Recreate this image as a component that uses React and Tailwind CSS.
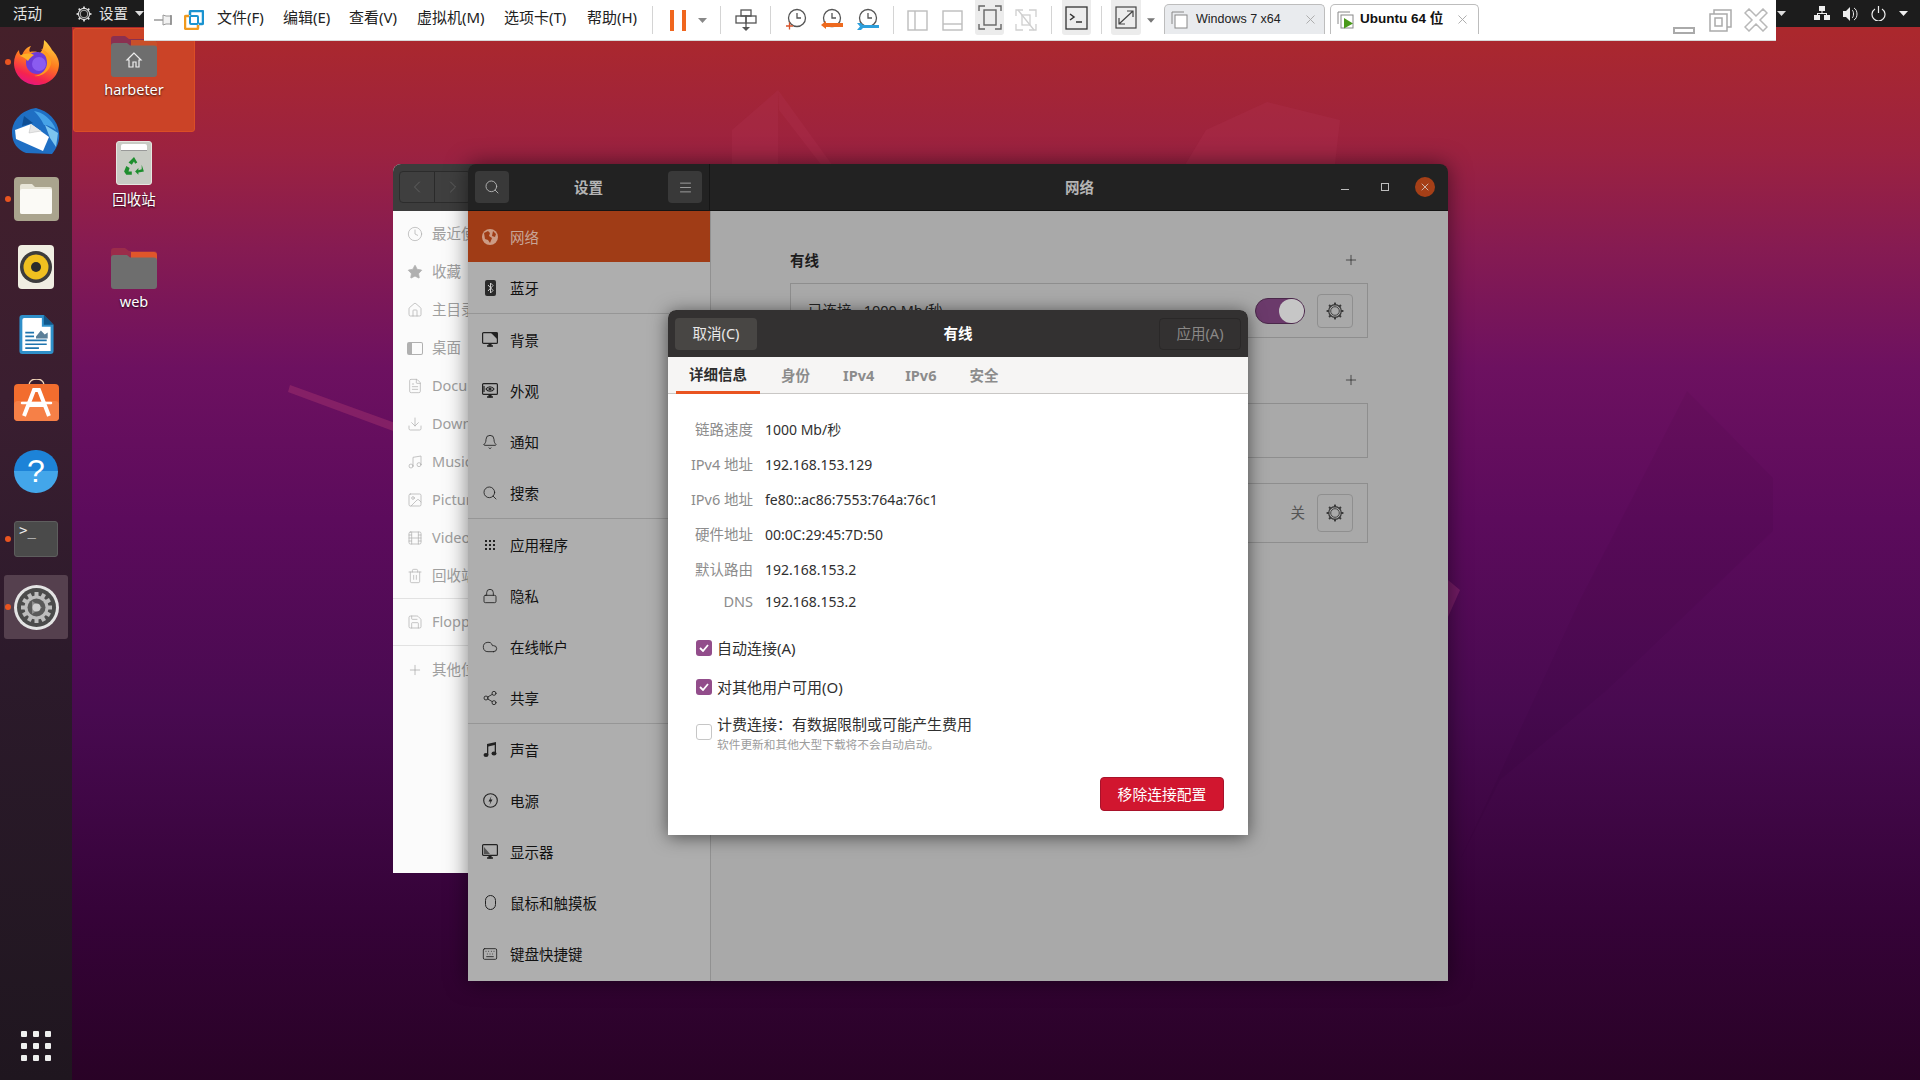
import {
  Bell, Cloud, Clock, Download, FileText, Film, Home, Image as ImageIcon, Keyboard, Lock,
  Music, Plus, Save, Search, Share2, Star, Trash2, X, Menu, ChevronLeft, ChevronRight,
} from "lucide-react";

const Sep = () => <div className="w-px h-[28px] bg-[#d4d4d4] shrink-0" />;

const Caret = ({ className = "" }) => (
  <svg viewBox="0 0 9 5" className={`w-[9px] h-[5px] shrink-0 ${className}`}><path d="M0 0h9L4.5 5z" fill="currentColor" /></svg>
);

function Gear({ size = 18, color = "#333" }) {
  const teeth = [0, 45, 90, 135, 180, 225, 270, 315];
  return (
    <svg width={size} height={size} viewBox="0 0 18 18" fill="none">
      {teeth.map((t) => (
        <rect key={t} x="8" y="0.6" width="2" height="2.600" fill={color} transform={`rotate(${t} 9 9)`} />
      ))}
      <circle cx="9" cy="9" r="6.300" stroke={color} strokeWidth="1.200" />
      <circle cx="9" cy="9" r="4.300" stroke={color} strokeWidth="0.900" />
    </svg>
  );
}

function FolderIcon({ home }) {
  return (
    <svg width="46" height="41" viewBox="0 0 46 41">
      <path d="M0 3a3 3 0 0 1 3-3h11l4 3h25a3 3 0 0 1 3 3v10H0z" fill={home ? "#8a3050" : "#9b2c4a"} />
      <path d="M20 4h23a3 3 0 0 1 3 3v6H20z" fill={home ? "#c8502a" : "#e0562a"} />
      <path d="M0 10a3 3 0 0 1 3-3h13l3 2.500h24a3 3 0 0 1 3 3V38a3 3 0 0 1-3 3H3a3 3 0 0 1-3-3z" fill="#6e6e6e" />
      {home && <path d="M23 17l-7 7h2v7h4v-5h3v5h3v-7h2z" fill="none" stroke="#eee" strokeWidth="1.200" />}
    </svg>
  );
}

function Firefox() {
  return (
    <svg width="46" height="46" viewBox="0 0 46 46">
      <defs>
        <linearGradient id="ffa" x1="0.7" y1="0" x2="0.3" y2="1">
          <stop offset="0" stopColor="#ffd23f" />
          <stop offset="0.45" stopColor="#ff7a1f" />
          <stop offset="0.8" stopColor="#f5234f" />
          <stop offset="1" stopColor="#e31587" />
        </linearGradient>
      </defs>
      <path d="M30 1c4 3 7 8 8 10 4 4 7 9 7 14 0 12-10 21-22 21S0 37 0 24c0-5 2-10 5-13 0 3 1 5 3 6 1-5 5-9 9-10-2 3-2 5-1 6 4-1 8 0 10 1 3-3 4-8 4-13z" fill="url(#ffa)" />
      <circle cx="23" cy="24" r="11" fill="#6e3bd8" />
      <circle cx="25" cy="25" r="7" fill="#8a5cf0" />
      <path d="M6 17c4-3 10-3 14-1-3 2-5 4-6 6-3-3-5-4-8-5z" fill="#ffb028" />
      <path d="M27 10c7 2 11 9 10 15-2 8-10 13-17 12 8-1 13-7 13-13 0-6-3-11-6-14z" fill="#ff9a1f" />
    </svg>
  );
}

function Thunderbird() {
  return (
    <svg width="48" height="46" viewBox="0 0 48 46">
      <path d="M24 0C10 2 0 12 0 25c0 10 6 17 14 20l26 1c5-6 8-13 7-21C46 12 36 3 24 0z" fill="#1f6fc4" />
      <path d="M22 3c8 1 18 8 22 19-4-3-8-5-12-5-3-6-6-10-10-14z" fill="#47a3e8" />
      <path d="M33 17l13 8-2 14-6-9z" fill="#7cc5f0" />
      <path d="M3 22l16-6 18 13-6 14-27-12z" fill="#fff" />
      <path d="M19 16l-2 9 12-2" fill="#e8e8e8" stroke="#bbb" strokeWidth="0.500" />
      <path d="M12 8l9 7-11 3z" fill="#0e4f96" />
    </svg>
  );
}

function Files() {
  return (
    <div className="w-[45px] h-[44px] rounded-[4px] bg-[#aaa48e] flex items-center justify-center">
      <svg width="32" height="30" viewBox="0 0 32 30">
        <path d="M2 0h10l3 3h15a2 2 0 0 1 2 2v23a2 2 0 0 1-2 2H2a2 2 0 0 1-2-2V2a2 2 0 0 1 2-2z" fill="#e8e5d8" />
        <path d="M0 7a2 2 0 0 1 2-2h28a2 2 0 0 1 2 2v21a2 2 0 0 1-2 2H2a2 2 0 0 1-2-2z" fill="#fbfaf6" />
      </svg>
    </div>
  );
}

function Rhythmbox() {
  return (
    <div className="w-[36px] h-[44px] rounded-[4px] bg-[#f0eee2] flex items-center justify-center">
      <svg width="32" height="32" viewBox="0 0 32 32">
        <circle cx="16" cy="16" r="16" fill="#3d3d3d" />
        <circle cx="16" cy="16" r="12.500" fill="#f0c020" />
        <circle cx="16" cy="16" r="5" fill="#2c2c2c" />
      </svg>
    </div>
  );
}

function Writer() {
  return (
    <svg width="36" height="39" viewBox="0 0 36 40" className="mb-[2px]">
      <path d="M1 3a3 3 0 0 1 3-3h22l10 10v27a3 3 0 0 1-3 3H4a3 3 0 0 1-3-3z" fill="#2f8fc9" />
      <path d="M26 0l10 10H26z" fill="#12578a" />
      <path d="M4 5a2 2 0 0 1 2-2h18v9h9v25H4z" fill="#fff" />
      <path d="M7 18h9M7 22h9M7 26h22M7 30h22M7 34h14" stroke="#1f74ad" strokeWidth="1.700" />
      <path d="M18 22l5-6 4 4 3-2v6H18z" fill="#5b7f98" />
    </svg>
  );
}

function AppStore() {
  return (
    <svg width="45" height="42" viewBox="0 0 45 42" className="mb-[6px]">
      <path d="M15 6c0-8 15-8 15 0" fill="none" stroke="#f3d6b8" strokeWidth="1.500" />
      <rect x="0" y="5" width="45" height="37" rx="4" fill="#f26d2e" />
      <rect x="0" y="22" width="45" height="20" rx="4" fill="#f68047" />
      <path d="M10 37L20 11h5l10 26M15 26h15" fill="none" stroke="#fff" strokeWidth="4" />
      <path d="M8 24h29" stroke="#fff" strokeWidth="2.500" strokeLinecap="round" />
    </svg>
  );
}

function SettingsApp() {
  const teeth = [0, 30, 60, 90, 120, 150, 180, 210, 240, 270, 300, 330];
  return (
    <svg width="45" height="45" viewBox="0 0 45 45">
      <circle cx="22.500" cy="22.500" r="22.500" fill="#e4e4e4" />
      <circle cx="22.500" cy="22.500" r="19.500" fill="#4b4b4b" />
      {teeth.map((t) => (
        <rect key={t} x="20.500" y="7" width="4" height="5" fill="#bdbdbd" transform={`rotate(${t} 22.500 22.500)`} />
      ))}
      <circle cx="22.500" cy="22.500" r="12" fill="#bdbdbd" />
      <circle cx="22.500" cy="22.500" r="9" fill="#5a5a5a" />
      <path d="M18 16l10 6.500-10 6.500z" fill="#8e8e8e" />
      <circle cx="22.500" cy="22.500" r="4" fill="#cfcfcf" />
    </svg>
  );
}

const DockDot = ({ y }) => <div className={`absolute left-[5px] w-[6px] h-[6px] rounded-full bg-[#e95420] ${y}`} />;

function Dock() {
  return (
    <div className="absolute left-0 top-[27px] bottom-0 w-[72px] bg-[linear-gradient(180deg,#45202a_0%,#3a1e30_35%,#2c1a2b_60%,#1f161f_100%)]">
      <DockDot y="top-[32px]" />
      <DockDot y="top-[169px]" />
      <DockDot y="top-[509px]" />
      <DockDot y="top-[577px]" />
      <div className="flex flex-col items-center">
        <div className="h-[68px] flex items-center mt-[1px] pl-[1px]"><Firefox /></div>
        <div className="h-[69px] flex items-center"><Thunderbird /></div>
        <div className="h-[68px] flex items-center"><Files /></div>
        <div className="h-[68px] flex items-center"><Rhythmbox /></div>
        <div className="h-[68px] flex items-center"><Writer /></div>
        <div className="h-[68px] flex items-center"><AppStore /></div>
        <div className="h-[68px] flex items-center">
          <div className="w-[44px] h-[43px] rounded-full bg-[linear-gradient(180deg,#1d83d8_50%,#43a6ea_50%)] flex items-center justify-center text-white text-[32px] leading-none font-['Liberation_Sans',sans-serif]">?</div>
        </div>
        <div className="h-[68px] flex items-center">
          <div className="w-[44px] h-[36px] rounded-[3px] bg-[#4a4a4a] border border-[#5e5e5e] text-[#eee] text-[14px] leading-none pl-[4px] pt-[1px] font-['DejaVu_Sans_Mono',monospace]">&gt;_</div>
        </div>
        <div className="w-[64px] h-[64px] rounded-[3px] bg-[#55404e] flex items-center justify-center mt-[2px]"><SettingsApp /></div>
      </div>
      <div className="absolute left-[21px] bottom-[19px] grid grid-cols-3 gap-x-[6px] gap-y-[6px]">
        {Array.from({ length: 9 }).map((_, i) => <div key={i} className="w-[6px] h-[6px] rounded-[1px] bg-[#eee]" />)}
      </div>
    </div>
  );
}

function DesktopIcons() {
  const label = "text-white text-[14.500px] leading-none [text-shadow:0_1px_2px_rgba(0,0,0,0.8)]";
  return (
    <>
      <div className="absolute left-[73px] top-[28px] w-[122px] h-[104px] rounded-[3px] bg-[#cb4327] border border-[#dc4e25]" />
      <div className="absolute left-[73px] top-[36px] w-[122px] flex flex-col items-center">
        <FolderIcon home />
        <div className={`${label} mt-[5px]`}>harbeter</div>
        <div className="mt-[44px] w-[36px] h-[44px] rounded-[3px] bg-[#c8cbc4] border border-[#e6e6e0] relative flex items-center justify-center">
          <div className="absolute top-[2px] left-[4px] right-[4px] h-[7px] bg-white rounded-t-[2px] border-b border-[#999]" />
          <svg width="22" height="22" viewBox="0 0 20 20" className="mt-[8px]">
            <path d="M10 1l3 5-2 1-1-2-2 3-3-2zM17 8l2 6-5 1v2l-3-3 3-3v2l3-1zM3 9l3 2-1 3h3v3H3l-2-3z" fill="#1e8e2e" />
          </svg>
        </div>
        <div className={`${label} mt-[7px]`}>回收站</div>
        <div className="mt-[42px]"><FolderIcon /></div>
        <div className={`${label} mt-[5px]`}>web</div>
      </div>
    </>
  );
}

function TopBar() {
  return (
    <div className="absolute left-0 top-0 w-full h-[27px] bg-[#1c1c1c] text-[#e6e6e6] text-[14.500px] flex items-center">
      <span className="ml-[13px] pt-[1px]">活动</span>
      <span className="ml-[34px]"><Gear size={16} color="#ddd" /></span>
      <span className="ml-[7px] pt-[1px]">设置</span>
      <Caret className="ml-[7px] text-[#ddd]" />
      <Caret className="ml-[1633px] text-[#ddd]" />
      <svg width="16" height="15" viewBox="0 0 16 15" className="ml-[28px]" fill="#eee">
        <rect x="5" y="0" width="6" height="5" /><rect x="0" y="9" width="6" height="5" /><rect x="10" y="9" width="6" height="5" />
        <path d="M7.500 5h1v2H13v2h-1V8H4v1H3V7h4.500z" />
      </svg>
      <svg width="15" height="14" viewBox="0 0 15 14" className="ml-[13px]" fill="#eee">
        <path d="M0 4h3l4-4v14l-4-4H0z" />
        <path d="M9 3c2 1 2 7 0 8M11 1c4 2 4 10 0 12" fill="none" stroke="#eee" strokeWidth="1" />
      </svg>
      <svg width="15" height="15" viewBox="0 0 15 15" className="ml-[13px]" fill="none" stroke="#eee" strokeWidth="1.200">
        <path d="M4 3a6.500 6.500 0 1 0 7 0M7.500 0v7" />
      </svg>
      <Caret className="ml-[13px] text-[#eee]" />
    </div>
  );
}

const ClockTool = ({ kind }) => (
  <svg width="23" height="24" viewBox="0 0 23 24" fill="none">
    <circle cx="12" cy="10" r="8.500" stroke="#555" strokeWidth="1.300" />
    <path d="M12 5v5h4" stroke="#555" strokeWidth="1.300" />
    {kind === "add" && <path d="M1 18h7M4.500 14.500v7" stroke="#d9542b" strokeWidth="1.300" />}
    {kind === "back" && <path d="M1 17l5-4v2h17v4H6v2z" fill="#ee6a1f" />}
    {kind === "wrench" && <path d="M1 15h4l2 2h16v3H7l-2 2H1l3-3.500z" fill="#2d9fdc" />}
  </svg>
);

const HiBox = ({ children }) => (
  <div className="w-[29px] h-[35px] self-start bg-[#ececec] rounded-b-[3px] flex items-center justify-center">{children}</div>
);

const MenuItem = ({ w, children }) => <span className={`${w} text-[15px] leading-none shrink-0 text-[#222] pb-[6px]`}>{children}</span>;

const TabStack = ({ play }) => (
  <svg width="17" height="18" viewBox="0 0 17 18" fill="none" className="shrink-0">
    <path d="M1 13V1h12" stroke="#888" />
    <rect x="4" y="4" width="12" height="13" fill="#fff" stroke="#888" />
    {play && <path d="M7 7l9 5.500-9 5z" fill="#4a9a1a" />}
  </svg>
);

function VmwareBar() {
  return (
    <div className="absolute left-[144px] top-0 w-[1632px] h-[41px] bg-white border-b border-[#d8d8d8] flex items-center font-['Noto_Sans','Noto_Sans_CJK_SC',sans-serif]">
      <svg width="20" height="12" viewBox="0 0 20 12" className="ml-[10px] shrink-0" fill="none">
        <path d="M0 6h9" stroke="#999" strokeWidth="1.500" /><path d="M9 1l3 1h5v8h-5l-3 1z" fill="#f2f2f2" stroke="#999" /><path d="M17 1v10" stroke="#888" strokeWidth="1.500" />
      </svg>
      <svg width="20" height="20" viewBox="0 0 20 20" className="ml-[10px] shrink-0" fill="none">
        <path d="M6 5V2a1 1 0 0 1 1-1h11a1 1 0 0 1 1 1v11a1 1 0 0 1-1 1h-3" stroke="#1a93d0" strokeWidth="2.500" />
        <path d="M14 15v3a1 1 0 0 1-1 1H2a1 1 0 0 1-1-1V7a1 1 0 0 1 1-1h3" stroke="#f09a1e" strokeWidth="2.500" />
        <rect x="6" y="6" width="8" height="8" rx="1" stroke="#1a93d0" strokeWidth="2" />
      </svg>
      <span className="w-[13px] shrink-0" />
      <MenuItem w="w-[66px]">文件(F)</MenuItem>
      <MenuItem w="w-[66px]">编辑(E)</MenuItem>
      <MenuItem w="w-[68px]">查看(V)</MenuItem>
      <MenuItem w="w-[87px]">虚拟机(M)</MenuItem>
      <MenuItem w="w-[83px]">选项卡(T)</MenuItem>
      <MenuItem w="w-[65px]">帮助(H)</MenuItem>
      <Sep />
      <div className="ml-[17px] flex gap-[8px] shrink-0">
        <div className="w-[4px] h-[21px] bg-[#f0661e]" /><div className="w-[4px] h-[21px] bg-[#f0661e]" />
      </div>
      <Caret className="ml-[12px] text-[#888]" />
      <span className="w-[13px] shrink-0" />
      <Sep />
      <svg width="22" height="23" viewBox="0 0 22 23" className="ml-[14px] shrink-0" fill="none" stroke="#555" strokeWidth="1.300">
        <rect x="6" y="1" width="10" height="6" /><rect x="1" y="7" width="10" height="7" /><rect x="11" y="7" width="10" height="7" />
        <path d="M11 14v5" /><path d="M7 18h8l-4 4z" fill="#555" stroke="none" />
      </svg>
      <span className="w-[13px] shrink-0" />
      <Sep />
      <span className="w-[14px] shrink-0" />
      <ClockTool kind="add" />
      <span className="w-[12px] shrink-0" />
      <ClockTool kind="back" />
      <span className="w-[13px] shrink-0" />
      <ClockTool kind="wrench" />
      <span className="w-[14px] shrink-0" />
      <Sep />
      <svg width="21" height="21" viewBox="0 0 21 21" className="ml-[13px] shrink-0" fill="none" stroke="#bdbdbd" strokeWidth="1.400"><rect x="1" y="1" width="19" height="19" /><path d="M8 1v19" /></svg>
      <svg width="21" height="21" viewBox="0 0 21 21" className="ml-[14px] mr-[12px] shrink-0" fill="none" stroke="#bdbdbd" strokeWidth="1.400"><rect x="1" y="1" width="19" height="19" /><path d="M1 14h19" /></svg>
      <HiBox>
        <svg width="24" height="25" viewBox="0 0 24 25" fill="none" stroke="#666" strokeWidth="1.400">
          <rect x="6" y="5" width="12" height="15" /><path d="M1 6V1h6M17 1h6v5M1 19v5h6M17 24h6v-5" />
        </svg>
      </HiBox>
      <svg width="22" height="22" viewBox="0 0 22 22" className="ml-[11px] shrink-0" fill="none" stroke="#cfcfcf" strokeWidth="1.300">
        <path d="M1 7V1h7M14 1h7v7M1 15v6h7M14 21h7v-6" /><rect x="7" y="6" width="8" height="10" /><path d="M3 1l16 20" />
      </svg>
      <span className="w-[14px] shrink-0" />
      <Sep />
      <span className="w-[10px] shrink-0" />
      <HiBox>
        <svg width="23" height="24" viewBox="0 0 23 24" fill="none" stroke="#333" strokeWidth="1.300">
          <rect x="1" y="1" width="21" height="22" /><path d="M5 8l4 3-4 3M11 16h6" strokeWidth="1.500" />
        </svg>
      </HiBox>
      <span className="w-[10px] shrink-0" />
      <Sep />
      <span className="w-[9px] shrink-0" />
      <div className="w-[30px] h-[35px] self-start bg-[#ececec] rounded-b-[3px] flex items-center justify-center">
        <svg width="22" height="23" viewBox="0 0 22 23" fill="none" stroke="#444" strokeWidth="1.200">
          <rect x="1" y="1" width="20" height="21" /><path d="M4 18l14-13M12 5h6v6M4 12v6h6" />
        </svg>
      </div>
      <Caret className="ml-[6px] text-[#777] !w-[8px]" />
      <div className="ml-[9px] self-start mt-[4px] w-[161px] h-[30px] rounded-t-[5px] bg-[#e9ebee] border border-b-0 border-[#bdbdbd] flex items-center pl-[6px] shrink-0">
        <TabStack />
        <span className="ml-[8px] text-[12.500px] text-[#222] font-['Liberation_Sans',sans-serif]">Windows 7 x64</span>
        <X size={15} strokeWidth={1.500} className="ml-auto mr-[6px] text-[#aaa]" />
      </div>
      <div className="ml-[5px] self-start mt-[4px] w-[149px] h-[30px] rounded-t-[5px] bg-white border border-b-0 border-[#bdbdbd] flex items-center pl-[6px] shrink-0">
        <TabStack play />
        <span className="ml-[6px] text-[13.500px] font-bold text-[#111] font-['Liberation_Sans','Noto_Sans_CJK_SC',sans-serif]">Ubuntu 64 位</span>
        <X size={15} strokeWidth={1.500} className="ml-auto mr-[8px] text-[#aaa]" />
      </div>
      <div className="ml-[194px] w-[22px] h-[7px] mt-[20px] border-2 border-[#aaa] shrink-0" />
      <svg width="23" height="23" viewBox="0 0 23 23" className="ml-[14px] shrink-0" fill="none" stroke="#aaa" strokeWidth="1.500">
        <path d="M5 5V1h17v17h-4" /><rect x="1" y="5" width="17" height="17" /><rect x="6" y="9" width="7" height="8" />
      </svg>
      <svg width="24" height="24" viewBox="0 0 24 24" className="ml-[12px] shrink-0" fill="#fff" stroke="#b8b8b8" strokeWidth="1.500">
        <path d="M1 5l4-4 7 7 7-7 4 4-7 7 7 7-4 4-7-7-7 7-4-4 7-7z" />
      </svg>
    </div>
  );
}

function FilesWindow() {
  const rows = [
    [Clock, "最近使用"], [Star, "收藏"], [Home, "主目录"], [null, "桌面"], [FileText, "Documents"],
    [Download, "Downloads"], [Music, "Music"], [ImageIcon, "Pictures"], [Film, "Videos"], [Trash2, "回收站"],
  ];
  return (
    <div className="absolute left-[393px] top-[164px] w-[200px] h-[709px] rounded-t-[8px] overflow-hidden bg-[#fbfbfb] flex flex-col text-[14.500px] text-[#a0a0a0]">
      <div className="h-[47px] bg-[#3c3c3c] shrink-0 pl-[6px] pt-[7px]">
        <div className="w-[72px] h-[32px] rounded-[4px] border border-[#2c2c2c] bg-[#3f3f3f] flex">
          <div className="w-[36px] border-r border-[#2a2a2a] flex items-center justify-center text-[#666]"><ChevronLeft size={20} strokeWidth={1} /></div>
          <div className="w-[36px] flex items-center justify-center text-[#666]"><ChevronRight size={20} strokeWidth={1} /></div>
        </div>
      </div>
      <div className="pt-[4px]">
        {rows.map(([Icon, name]) => (
          <div key={name} className="h-[38px] flex items-center whitespace-nowrap overflow-hidden">
            <span className="w-[39px] pl-[14px] shrink-0 text-[#b0b0b0]">
              {Icon ? <Icon size={16} strokeWidth={1.100} fill={name === "收藏" ? "currentColor" : "none"} /> : <div className="w-[16px] h-[13px] border border-[#b0b0b0] rounded-[2px] border-l-[5px]" />}
            </span>
            {name}
          </div>
        ))}
      </div>
      <div className="h-px bg-[#e2e2e2] mt-[3px]" />
      <div className="h-[46px] flex items-center"><span className="w-[39px] pl-[14px] shrink-0 text-[#b0b0b0]"><Save size={16} strokeWidth={1.100} /></span>Floppy Disk</div>
      <div className="h-px bg-[#e2e2e2]" />
      <div className="h-[48px] flex items-center"><span className="w-[39px] pl-[14px] shrink-0"><Plus size={16} strokeWidth={1} /></span>其他位置</div>
    </div>
  );
}

const Globe2 = () => (
  <svg width="16" height="16" viewBox="0 0 16 16"><circle cx="8" cy="8" r="8" fill="#cc9b85" /><path d="M2 4l4-2 2 2-1 3 3 2-2 5-2-3-3-1zM11 2l3 3-1 3-3-1z" fill="#a03c16" /></svg>
);
const BtIcon = () => (
  <svg width="11" height="16" viewBox="0 0 11 16"><rect width="11" height="16" rx="2" fill="#2a2a2a" /><path d="M3 5l5 5.500L5.500 13V3L8 5.500 3 11" fill="none" stroke="#ccc" /></svg>
);
const MonitorIcon = ({ mode }) => (
  <svg width="16" height="15" viewBox="0 0 16 15" fill="none" stroke="#222" strokeWidth="1.200">
    <rect x="0.600" y="0.600" width="14.800" height="10.800" rx="1" />
    <path d="M5 14h6" strokeWidth="1.500" /><path d="M7 11.500h2V14H7z" fill="#222" />
    {mode === "bg" && <path d="M10 1l5 5V1z" fill="#222" />}
    {mode === "eye" && <><path d="M4 6c2-3 6-3 8 0-2 3-6 3-8 0z" /><circle cx="8" cy="6" r="1" fill="#222" /><path d="M2 3v6" /></>}
    {mode === "display" && <path d="M2 3l6 7H2z" fill="#555" stroke="none" />}
  </svg>
);
const GridIcon = () => (
  <div className="grid grid-cols-3 gap-[2px]">{Array.from({ length: 9 }).map((_, i) => <div key={i} className="w-[2px] h-[2px] bg-[#222]" />)}</div>
);
const MouseIcon = () => (
  <svg width="11" height="15" viewBox="0 0 11 15" fill="none" stroke="#222"><rect x="0.500" y="0.500" width="10" height="14" rx="5" /></svg>
);
const PowerIcon = () => (
  <svg width="15" height="15" viewBox="0 0 15 15" fill="none"><circle cx="7.500" cy="7.500" r="6.800" stroke="#222" strokeWidth="1.100" /><path d="M8.500 3L5.500 8.500h2l-1 3.500 3-5.500h-2z" fill="#222" /></svg>
);
const NoteIcon = () => (
  <svg width="14" height="15" viewBox="0 0 14 15" fill="#222"><path d="M4 2l9-2v11h-1.300V3L5.300 4.400V13H4z" /><ellipse cx="3" cy="13" rx="2.500" ry="2" /><ellipse cx="11" cy="11.500" rx="2.500" ry="2" /></svg>
);

const lu = { size: 16, strokeWidth: 1.300, color: "#222" };

const groups = [
  [["蓝牙", <BtIcon />]],
  [["背景", <MonitorIcon mode="bg" />], ["外观", <MonitorIcon mode="eye" />], ["通知", <Bell {...lu} />], ["搜索", <Search {...lu} />]],
  [["应用程序", <GridIcon />], ["隐私", <Lock {...lu} />], ["在线帐户", <Cloud {...lu} />], ["共享", <Share2 {...lu} />]],
  [["声音", <NoteIcon />], ["电源", <PowerIcon />], ["显示器", <MonitorIcon mode="display" />], ["鼠标和触摸板", <MouseIcon />], ["键盘快捷键", <Keyboard {...lu} />]],
];

const HeaderBtn = ({ children }) => (
  <div className="w-[34px] h-[32px] rounded-[4px] bg-[#393939] flex items-center justify-center text-[#bdbdbd]">{children}</div>
);

function SettingsRow({ name, icon }) {
  return (
    <div className="h-[51px] flex items-center text-[14.500px] text-[#111]">
      <span className="w-[42px] flex justify-center pl-[2px] shrink-0">{icon}</span>
      <span className="pt-[3px]">{name}</span>
    </div>
  );
}

function GearBtn({ h }) {
  return (
    <div className={`w-[36px] ${h} rounded-[4px] border border-[#8f8f8f] flex items-center justify-center`}><Gear size={18} color="#3a3a3a" /></div>
  );
}

function SettingsWindow() {
  const box = "w-[578px] border border-[#8e8e8e] flex items-center";
  return (
    <div className="absolute left-[468px] top-[164px] w-[980px] h-[817px] rounded-t-[8px] overflow-hidden flex flex-col shadow-[0_0_22px_rgba(0,0,0,0.5)]">
      <div className="h-[47px] bg-[#222222] flex shrink-0 border-b border-[#141414]">
        <div className="w-[242px] border-r border-[#151515] flex items-center px-[7px]">
          <HeaderBtn><Search size={16} strokeWidth={1.300} /></HeaderBtn>
          <span className="flex-1 text-center text-[14.500px] font-bold text-[#b4b4b4] pt-[2px]">设置</span>
          <HeaderBtn><Menu size={15} strokeWidth={1.200} /></HeaderBtn>
        </div>
        <div className="flex-1 flex items-center relative">
          <span className="flex-1 text-center text-[14.500px] font-bold text-[#b4b4b4] pl-[1px] pt-[2px]">网络</span>
          <div className="absolute right-[13px] flex items-center text-[#bdbdbd]">
            <div className="w-[8px] h-px bg-[#bdbdbd] mt-[4px]" />
            <div className="ml-[32px] w-[8px] h-[8px] border border-[#bdbdbd]" />
            <div className="ml-[26px] w-[20px] h-[20px] rounded-full bg-[#a53f17] flex items-center justify-center"><X size={12} strokeWidth={1.500} color="#ddd" /></div>
          </div>
        </div>
      </div>
      <div className="flex-1 flex min-h-0">
        <div className="w-[243px] bg-[#aeaeae] border-r border-[#919191] shrink-0">
          <div className="h-[51px] bg-[#a03c16] flex items-center text-[14.500px] text-[#c7a597]">
            <span className="w-[42px] flex justify-center pl-[2px] shrink-0"><Globe2 /></span><span className="pt-[3px]">网络</span>
          </div>
          {groups.map((g, i) => (
            <div key={i} className={i === 0 ? "" : "border-t border-[#969696]"}>
              {g.map(([name, icon]) => <SettingsRow key={name} name={name} icon={icon} />)}
            </div>
          ))}
        </div>
        <div className="flex-1 bg-[#a9a9a9] pl-[79px] pt-[37px] text-[#1c1c1c]">
          <div className="w-[578px] h-[24px] flex items-center justify-between text-[14.500px] font-bold">
            <span className="pt-[2px]">有线</span><Plus size={16} strokeWidth={1} className="mr-[9px]" />
          </div>
          <div className={`${box} h-[55px] mt-[11px] pl-[17px] pr-[14px] text-[14.500px] text-[#222]`}>
            已连接 - 1000 Mb/秒
            <div className="ml-auto w-[50px] h-[26px] rounded-full bg-[#6b3a6b] border border-[#4a284a] flex justify-end">
              <div className="w-[25px] h-[24px] rounded-full bg-[#c6c6c6]" />
            </div>
            <div className="ml-[12px]"><GearBtn h="h-[34px]" /></div>
          </div>
          <div className="w-[578px] h-[24px] mt-[30px] flex items-center justify-end">
            <Plus size={16} strokeWidth={1} className="mr-[9px]" />
          </div>
          <div className={`${box} h-[55px] mt-[11px]`} />
          <div className={`${box} h-[60px] mt-[25px] justify-end pr-[14px]`}>
            <span className="text-[14.500px] text-[#555] mr-[12px]">关</span>
            <GearBtn h="h-[38px]" />
          </div>
        </div>
      </div>
    </div>
  );
}

function Check({ on }) {
  return (
    <div className={`w-[16px] h-[16px] rounded-[3px] shrink-0 flex items-center justify-center ${on ? "bg-[#924d8b]" : "bg-white border border-[#c6c6c6]"}`}>
      {on && <svg width="10" height="8" viewBox="0 0 10 8" fill="none"><path d="M1 4l3 3 5-6" stroke="#fff" strokeWidth="1.800" /></svg>}
    </div>
  );
}

const details = [
  ["链路速度", "1000 Mb/秒", "h-[35px]"],
  ["IPv4 地址", "192.168.153.129", "h-[35px]"],
  ["IPv6 地址", "fe80::ac86:7553:764a:76c1", "h-[35px]"],
  ["硬件地址", "00:0C:29:45:7D:50", "h-[35px]"],
  ["默认路由", "192.168.153.2", "h-[35px]"],
  ["DNS", "192.168.153.2", "h-[35px] -mt-[3px]"],
];

function Dialog() {
  return (
    <div className="absolute left-[668px] top-[310px] w-[580px] h-[525px] rounded-t-[8px] overflow-hidden bg-white flex flex-col shadow-[0_2px_18px_rgba(0,0,0,0.55)]">
      <div className="h-[47px] bg-[#333131] flex items-center justify-between px-[7px] relative shrink-0">
        <div className="w-[82px] h-[32px] rounded-[4px] bg-[#484644] flex items-center justify-center text-[14.500px] text-[#e8e8e8]">取消(C)</div>
        <span className="absolute left-0 right-0 text-center text-[14.500px] font-bold text-white">有线</span>
        <div className="w-[82px] h-[32px] rounded-[4px] border border-[#2a2828] flex items-center justify-center text-[14.500px] text-[#8a8886]">应用(A)</div>
      </div>
      <div className="h-[37px] bg-[#f6f5f4] border-b border-[#c9c7c5] flex text-[14.500px] font-bold text-[#8c8c8c] pl-[8px] shrink-0">
        <div className="w-[84px] h-[37px] border-b-[3px] border-[#e95420] text-[#2e2e2e] flex items-center justify-center pt-[2px]">详细信息</div>
        <div className="ml-[21px] flex items-center pt-[2px]">身份</div>
        <div className="ml-[33px] flex items-center pt-[2px]">IPv4</div>
        <div className="ml-[31px] flex items-center pt-[2px]">IPv6</div>
        <div className="ml-[33px] flex items-center pt-[2px]">安全</div>
      </div>
      <div className="pt-[18px]">
        {details.map(([k, v, h]) => (
          <div key={k} className={`flex items-center ${h}`}>
            <span className="w-[85px] text-right text-[14.500px] text-[#8c8c8c] shrink-0">{k}</span>
            <span className="ml-[12px] text-[14px] text-[#303030]">{v}</span>
          </div>
        ))}
      </div>
      <div className="pl-[28px] text-[15px] text-[#303030]">
        <div className="flex items-center h-[32px] mt-[13px]"><Check on /><span className="ml-[5px]">自动连接(A)</span></div>
        <div className="flex items-center h-[32px] mt-[7px]"><Check on /><span className="ml-[5px]">对其他用户可用(O)</span></div>
        <div className="flex items-start mt-[11px]">
          <div className="mt-[10px]"><Check /></div>
          <div className="ml-[5px]">
            <div className="leading-[20px]">计费连接：有数据限制或可能产生费用</div>
            <div className="leading-[16px] mt-[2px] text-[11.700px] text-[#9c9c9c]">软件更新和其他大型下载将不会自动启动。</div>
          </div>
        </div>
      </div>
      <div className="mt-auto mb-[24px] mr-[24px] self-end w-[124px] h-[34px] rounded-[4px] bg-[#d1162f] border border-[#a8122a] flex items-center justify-center text-[14.800px] text-white">移除连接配置</div>
    </div>
  );
}

// faint shapes of the focal wallpaper
function Wallpaper() {
  return (
    <svg className="absolute inset-0" width="1920" height="1080" viewBox="0 0 1920 1080" fill="none">
      <path d="M732 130l46-40v90h-46z" fill="#b03350" fillOpacity="0.3" />
      <path d="M778 90l65 90h-10L779 110z" fill="#b03350" fillOpacity="0.3" />
      <path d="M1176 180l30-50 61-28 73 18-8 70h-156z" fill="#b03350" fillOpacity="0.3" />
      <path d="M290 385l180 65-4 8-178-66z" fill="#b03a70" fillOpacity="0.4" />
      <path d="M1687 391l86 87 0 53-166 159-107 90-40 80 120-260z" fill="#000" fillOpacity="0.035" />
      <path d="M1448 580l12 10-12 27z" fill="#8a2a70" fillOpacity="0.55" />
    </svg>
  );
}

export default function App() {
  return (
    <div className="relative w-[1920px] h-[1080px] overflow-hidden bg-[linear-gradient(180deg,#ab282d_3%,#9c2240_14%,#861b52_23%,#6d1160_34%,#5c0b5c_48%,#480a50_66%,#360339_84%,#290226_100%)] font-['Noto_Sans','Noto_Sans_CJK_SC',sans-serif]">
      <Wallpaper />
      <DesktopIcons />
      <FilesWindow />
      <SettingsWindow />
      <Dialog />
      <Dock />
      <TopBar />
      <VmwareBar />
    </div>
  );
}
